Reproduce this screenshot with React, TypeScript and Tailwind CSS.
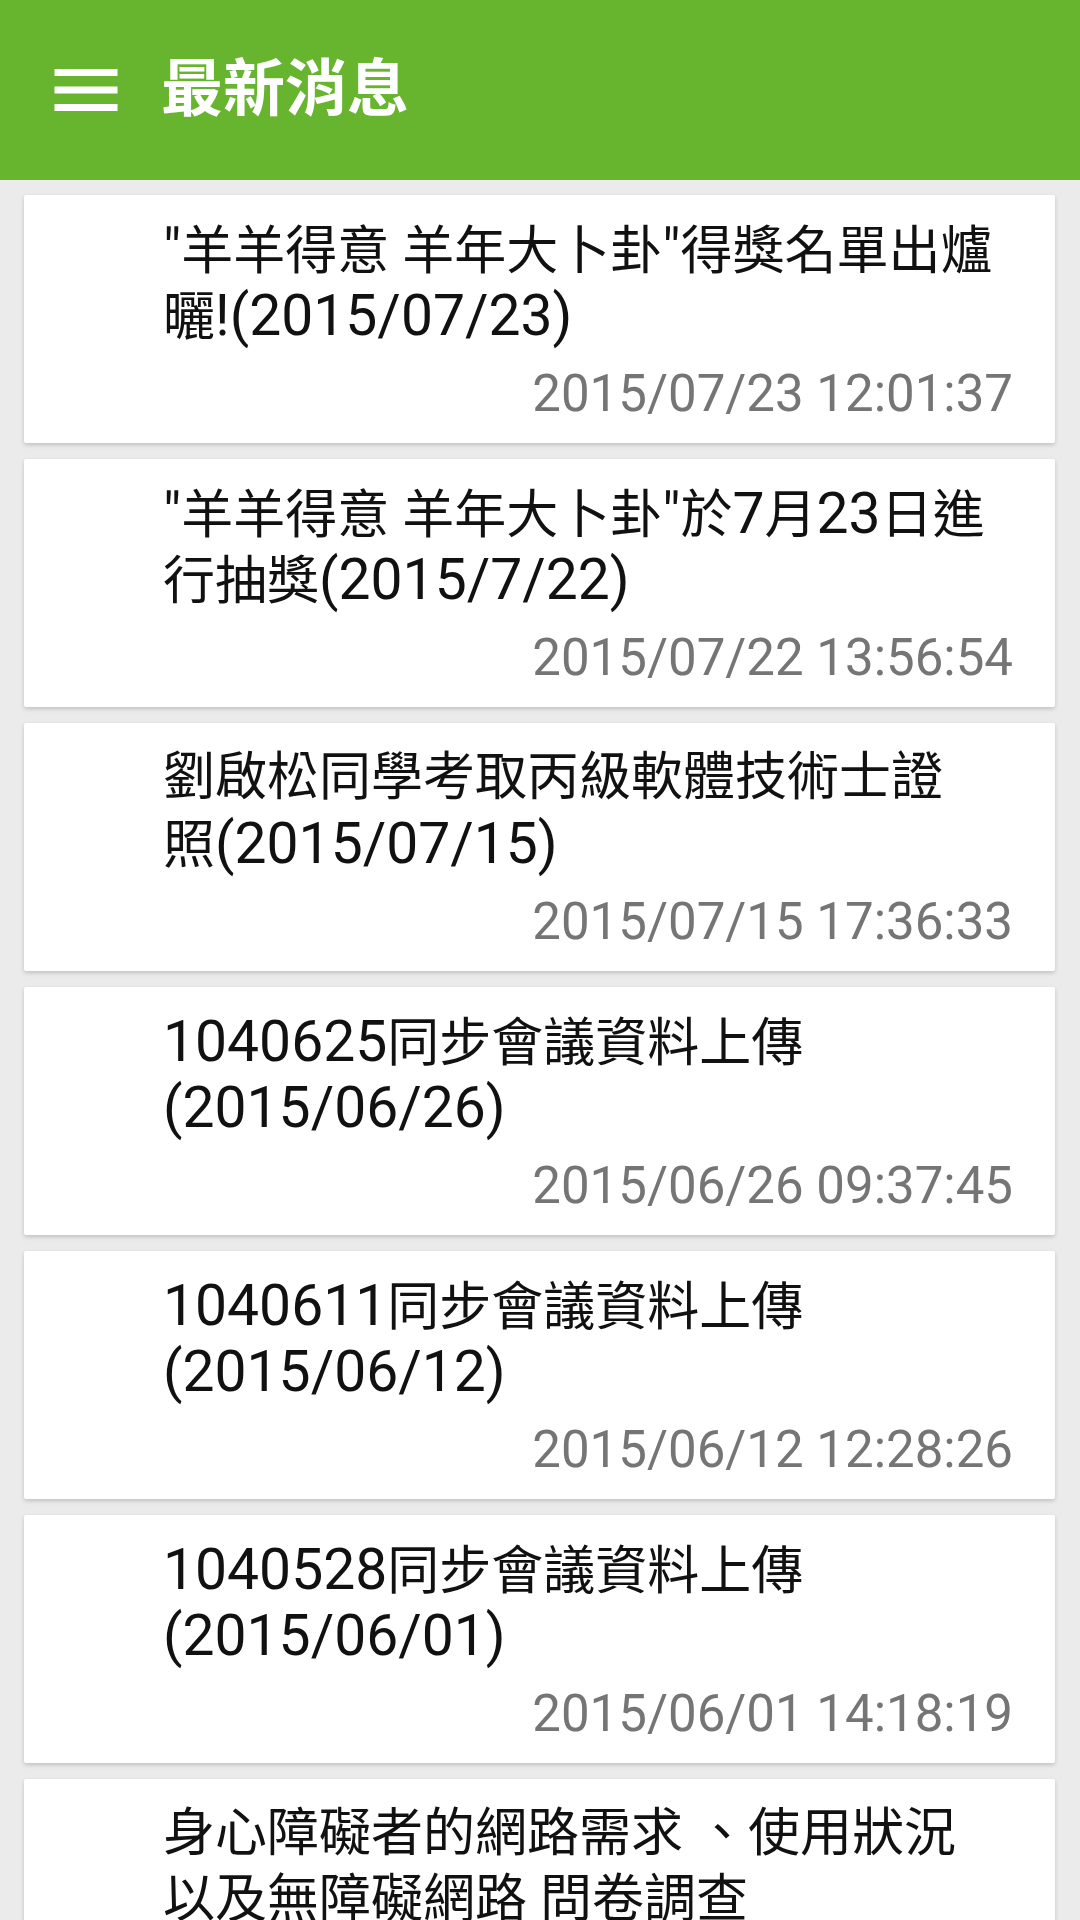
import React from "react";

type Item = { lines: string[]; date: string };

const items: Item[] = [
  { lines: ['"羊羊得意 羊年大卜卦"得獎名單出爐', "曬!(2015/07/23)"], date: "2015/07/23 12:01:37" },
  { lines: ['"羊羊得意 羊年大卜卦"於7月23日進', "行抽獎(2015/7/22)"], date: "2015/07/22 13:56:54" },
  { lines: ["劉啟松同學考取丙級軟體技術士證", "照(2015/07/15)"], date: "2015/07/15 17:36:33" },
  { lines: ["1040625同步會議資料上傳", "(2015/06/26)"], date: "2015/06/26 09:37:45" },
  { lines: ["1040611同步會議資料上傳", "(2015/06/12)"], date: "2015/06/12 12:28:26" },
  { lines: ["1040528同步會議資料上傳", "(2015/06/01)"], date: "2015/06/01 14:18:19" },
  { lines: ["身心障礙者的網路需求 、使用狀況", "以及無障礙網路 問卷調查"], date: "2015/05/20 10:00:00" },
];

const font = { fontFamily: 'Roboto, "Noto Sans CJK TC", sans-serif' };

function Line({ text }: { text: string }) {
  const parts = text.match(/[\x20-\x7e]+|[^\x20-\x7e]+/g) || [];
  return (
    <div className="h-[66px] whitespace-nowrap">
      {parts.map((p, k) =>
        /^[\x20-\x7e]+$/.test(p) && /[^ ]/.test(p) ? (
          <span key={k} className="text-[57px]">
            {p}
          </span>
        ) : (
          <span key={k}>{p}</span>
        )
      )}
    </div>
  );
}

export default function App() {
  return (
    <div className="w-[1080px] h-[1920px] overflow-hidden bg-[#ebebeb] flex flex-col" style={font}>
      <header className="h-[180px] shrink-0 bg-[#67b42f] flex items-center pl-[44px]">
        <svg viewBox="0 0 24 24" className="w-[84px] h-[84px]" fill="#ffffff">
          <path d="M3 18h18v-2H3v2zm0-5h18v-2H3v2zm0-7v2h18V6H3z" />
        </svg>
        <h1
          className="ml-[33px] mb-[12px] text-[62px] font-bold text-white leading-none"
          style={{ fontFamily: '"Noto Sans CJK TC", Roboto, sans-serif' }}
        >
          最新消息
        </h1>
      </header>
      <main className="flex flex-col gap-4 pt-[15px] pl-[24px] pr-[25px]">
        {items.map((it, i) => (
          <div
            key={i}
            className="shrink-0 h-[248px] bg-white rounded-[2px] shadow-[0_2px_4px_rgba(0,0,0,0.18)] pt-[22px] pl-[139px] pr-[42px] flex flex-col"
          >
            <div className="text-[52px] leading-[66px] text-[#111111]">
              {it.lines.map((l, j) => (
                <Line key={j} text={l} />
              ))}
            </div>
            <div className="mt-[15px] text-right text-[51px] leading-[60px] text-[#757575]">{it.date}</div>
          </div>
        ))}
      </main>
    </div>
  );
}
